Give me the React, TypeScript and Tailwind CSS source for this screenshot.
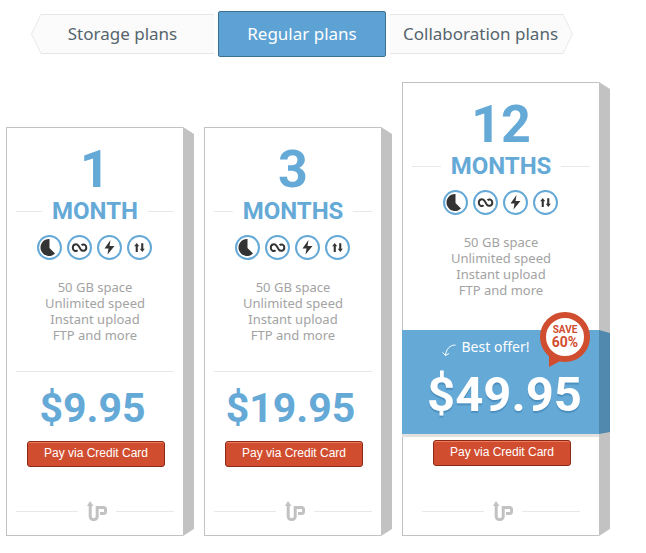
import React from "react";

type Plan = {
  id: string;
  count: string;
  unit: string;
  price: string;
  featured?: boolean;
};

const plans: Plan[] = [
  { id: "one", count: "1", unit: "MONTH", price: "$9.95" },
  { id: "three", count: "3", unit: "MONTHS", price: "$19.95" },
  { id: "twelve", count: "12", unit: "MONTHS", price: "$49.95", featured: true },
];

const features = ["50 GB space", "Unlimited speed", "Instant upload", "FTP and more"];

const hatch =
  "bg-[repeating-conic-gradient(#f8f8f8_0_25%,#fdfdfd_0_50%)] bg-[length:2px_2px]";

function TabPoint({ flip = false }: { flip?: boolean }) {
  return (
    <svg
      viewBox="0 0 10 40"
      className={`h-10 w-[10px] shrink-0 ${flip ? "-scale-x-100" : ""}`}
      aria-hidden="true"
    >
      <path d="M10 .5 .5 20 10 39.5" fill="#fbfbfb" stroke="#e9e9e9" />
    </svg>
  );
}

function Tabs() {
  return (
    <nav className="mx-[25px] flex h-[46px] max-w-[542px] items-center gap-1 text-[17px] leading-[38px] text-[#55646c]">
      <a href="#storage" className="flex flex-[183] whitespace-nowrap">
        <TabPoint />
        <span className={`flex-1 border-y border-[#e6e6e6] pr-[10px] text-center ${hatch}`}>
          Storage plans
        </span>
      </a>
      <a
        href="#regular"
        aria-current="page"
        className="flex-[166] whitespace-nowrap rounded-[2px] border border-[#3d718f] bg-[repeating-conic-gradient(#5aa0d2_0_25%,#60a4d5_0_50%)] bg-[length:2px_2px] text-center leading-[44px] text-white"
      >
        Regular plans
      </a>
      <a href="#collaboration" className="flex flex-[183] whitespace-nowrap">
        <span className={`flex-1 border-y border-[#e6e6e6] pl-[8px] text-center ${hatch}`}>
          Collaboration plans
        </span>
        <TabPoint flip />
      </a>
    </nav>
  );
}

function FeatureIcons() {
  const ring = "h-[25px] w-[25px]";
  return (
    <div className="flex justify-center gap-[5px] pr-[2px]" aria-hidden="true">
      <svg viewBox="0 0 25 25" className={ring}>
        <circle cx="12.5" cy="12.5" r="11.5" fill="white" stroke="#65a9d7" strokeWidth="2" />
        <path d="M12.5 4A8.5 8.5 0 1 0 18 18.5L12.5 13Z" fill="#333" />
      </svg>
      <svg viewBox="0 0 25 25" className={ring}>
        <circle cx="12.5" cy="12.5" r="11.5" fill="white" stroke="#65a9d7" strokeWidth="2" />
        <path
          d="M10.600 15.200C9 16.800 5.800 16 5.800 12.700S9.500 8.200 11.500 10.800L13.600 14.300C15.600 17 19.300 15.800 19.300 12.700S16.200 8.600 14.600 10.200"
          fill="none"
          stroke="#333"
          strokeWidth="2"
        />
      </svg>
      <svg viewBox="0 0 25 25" className={ring}>
        <circle cx="12.5" cy="12.5" r="11.5" fill="white" stroke="#65a9d7" strokeWidth="2" />
        <path d="M13.5 5 7.5 13.5H11.5L10.5 19.5 17.5 11H12.500Z" fill="#333" />
      </svg>
      <svg viewBox="0 0 25 25" className={ring}>
        <circle cx="12.5" cy="12.5" r="11.5" fill="white" stroke="#65a9d7" strokeWidth="2" />
        <path
          d="M9.700 8 7.200 11.300H8.700V17H10.800V11.300H12.200ZM14.200 8.200H16.300V13.700H17.800L15.300 17 12.800 13.700H14.200Z"
          fill="#333"
        />
      </svg>
    </div>
  );
}

function UpLogo() {
  return (
    <svg viewBox="0 0 20 21" className="h-[21px] w-5 shrink-0" role="img" aria-label="Up">
      <path d="M3 0 6.500 5H0Z" fill="#c2c2c2" />
      <path
        d="M3.200 3V15.500a3 3 0 0 0 3 3h1a3 3 0 0 0 3-3V6.500h6.300a2 2 0 0 1 2 2v2a2 2 0 0 1-2 2h-3.500"
        fill="none"
        stroke="#c2c2c2"
        strokeWidth="3"
      />
    </svg>
  );
}

function PayButton() {
  return (
    <button
      type="button"
      className="mx-auto block h-[26px] w-[138px] whitespace-nowrap rounded-[3px] border border-[#8b2a17] bg-[#d14d2f] pb-[2px] font-['Liberation_Sans',Arial,sans-serif] text-[12px] leading-5 text-white shadow-[inset_0_1px_0_#ef7a5c]"
    >
      Pay via Credit Card
    </button>
  );
}

function SaveBadge() {
  return (
    <div className="absolute -top-[18px] right-[20px] h-[56px] w-[50px]">
      <svg viewBox="0 0 50 56" className="absolute inset-0" aria-hidden="true">
        <path d="M9 40V55L24 47Z" fill="#d14d2f" />
        <circle cx="25" cy="25" r="22" fill="white" stroke="#d14d2f" strokeWidth="6" />
      </svg>
      <p className="relative pt-[12px] text-center font-[Roboto,sans-serif] text-[10px] font-bold leading-3 text-[#d14d2f]">
        SAVE
        <span className="block text-[14px]">60%</span>
      </p>
    </div>
  );
}

function FeaturedPrice() {
  return (
    <div className="relative -ml-px -mr-[11px] flex h-[107px]">
      <div className="h-[107px] flex-1 border-b-[3px] border-[#e3e0e0] bg-[#65a9d7] text-white">
        <div className="flex items-end justify-center gap-[6px] pr-[30px] pt-[7px]">
          <svg viewBox="0 0 14 13" className="h-[13px] w-[14px]" aria-hidden="true">
            <path
              d="M13.500 1C8 1 4 5 3.500 11.500M.5 8.500 3.500 11.500 7 9.500"
              fill="none"
              stroke="white"
            />
          </svg>
          <span className="text-[14px] leading-5">Best offer!</span>
        </div>
        <p className="pl-[8px] pt-[9px] text-center font-[Roboto,sans-serif] text-[49px] font-bold leading-[58px] [text-shadow:0_2px_1px_#4b8fbe]">
          $49.95
        </p>
      </div>
      <div className="h-[104px] w-[11px] bg-[#5088ae] [clip-path:polygon(0_0,100%_3px,100%_calc(100%-2px),0_100%)]" />
      <SaveBadge />
    </div>
  );
}

function PlanCard({ plan }: { plan: Plan }) {
  const { featured } = plan;
  return (
    <article className={`flex min-w-0 ${featured ? "flex-[208]" : "flex-[188]"}`}>
      <div className="relative z-10 min-w-0 flex-1 border border-r-0 border-[#c2c2c2] pb-[13px]">
        <h2 className="pt-[13px] text-center font-[Roboto,sans-serif] font-bold text-[#65a9d7]">
          <span className="block text-[52px] leading-[58px]">{plan.count}</span>
          <span className="flex items-center gap-[10px] px-[9px] text-[24px] leading-6 before:h-px before:flex-1 before:bg-[#e8e8e8] after:h-px after:flex-1 after:bg-[#e8e8e8]">
            {plan.unit}
          </span>
        </h2>
        <div className="pt-[12px]">
          <FeatureIcons />
        </div>
        <ul className="pt-[19px] text-center text-[13px] leading-4 text-[#a3a3a3]">
          {features.map((feature) => (
            <li key={feature}>{feature}</li>
          ))}
        </ul>
        {featured ? (
          <div className="pt-[32px]">
            <FeaturedPrice />
          </div>
        ) : (
          <div className="mx-[9px] mt-[28px] border-t border-[#e8e8e8] pb-[4px] pt-[7px]">
            <p className="pr-[5px] text-center font-[Roboto,sans-serif] text-[41px] font-bold leading-[58px] text-[#65a9d7]">
              {plan.price}
            </p>
          </div>
        )}
        <div className={featured ? "pl-[2px] pt-[3px]" : "pl-[2px]"}>
          <PayButton />
        </div>
        <div
          className={`flex items-center gap-[9px] before:h-px before:flex-[62] before:bg-[#e8e8e8] after:h-px after:flex-[58] after:bg-[#e8e8e8] ${featured ? "mt-[35px] px-[19px]" : "mt-[34px] px-[9px]"}`}
        >
          <UpLogo />
        </div>
      </div>
      <div className="w-[11px] shrink-0 bg-[#c2c2c2] [clip-path:polygon(0_0,100%_7px,100%_calc(100%-7px),0_100%)]" />
    </article>
  );
}

export default function App() {
  return (
    <main className="max-w-[616px] bg-white px-[6px] pt-[11px] font-['Noto_Sans','Open_Sans',sans-serif]">
      <Tabs />
      <section aria-label="Regular plans" className="mt-[25px] flex items-end gap-[10px]">
        {plans.map((plan) => (
          <PlanCard key={plan.id} plan={plan} />
        ))}
      </section>
    </main>
  );
}
